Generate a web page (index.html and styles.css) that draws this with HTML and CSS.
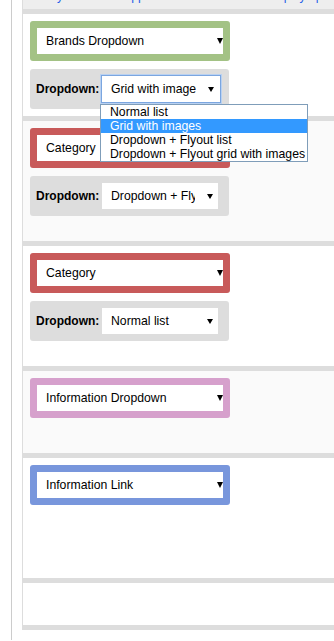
FILE: index.html
```html
<!DOCTYPE html>
<html lang="en">
<head>
    <meta charset="UTF-8">
    <meta name="viewport" content="width=device-width, initial-scale=1.0">
    <title>Menu blocks</title>
    <link rel="stylesheet" href="styles.css">
</head>
<body>
    <div class="rail">
        <div class="panel">
            <div class="topbar">
                <div class="topbar-text">
                    <span>y</span><span>pp</span><span>p</span><span>y</span><span>p</span>
                </div>
            </div>

            <div class="zone zone-first">
                <div class="pick pick-green">
                    <span class="pick-label">Brands Dropdown</span>
                    <span class="caret"></span>
                </div>
                <div class="dd-row">
                    <span class="dd-label">Dropdown:</span>
                    <div class="dd-select is-open">
                        <span class="dd-value">Grid with images</span>
                        <span class="caret"></span>
                        <ul class="dd-list">
                            <li>Normal list</li>
                            <li class="is-hl">Grid with images</li>
                            <li>Dropdown + Flyout list</li>
                            <li>Dropdown + Flyout grid with images</li>
                        </ul>
                    </div>
                </div>
            </div>

            <div class="zone zone-shade">
                <div class="pick pick-red">
                    <span class="pick-label">Category</span>
                    <span class="caret"></span>
                </div>
                <div class="dd-row">
                    <span class="dd-label">Dropdown:</span>
                    <div class="dd-select">
                        <span class="dd-value">Dropdown + Flyout list</span>
                        <span class="caret"></span>
                    </div>
                </div>
            </div>

            <div class="zone">
                <div class="pick pick-red">
                    <span class="pick-label">Category</span>
                    <span class="caret"></span>
                </div>
                <div class="dd-row">
                    <span class="dd-label">Dropdown:</span>
                    <div class="dd-select">
                        <span class="dd-value">Normal list</span>
                        <span class="caret"></span>
                    </div>
                </div>
            </div>

            <div class="zone zone-mid zone-shade">
                <div class="pick pick-pink">
                    <span class="pick-label">Information Dropdown</span>
                    <span class="caret"></span>
                </div>
            </div>

            <div class="zone">
                <div class="pick pick-blue">
                    <span class="pick-label">Information Link</span>
                    <span class="caret"></span>
                </div>
            </div>

            <div class="zone zone-end"></div>
        </div>
    </div>
</body>
</html>
```

FILE: styles.css
```css
body {
    margin: 0;
    font-family: "Liberation Sans", Arial, sans-serif;
    font-size: 12.25px;
    color: #000;
    background-color: #fff;
    overflow: hidden;
}
.rail {
    margin-left: 11px;
    padding-left: 10px;
    height: 640px;
    border-left: 1px solid #ccc;
}
.panel {
    border-left: 1px solid #ddd;
    border-bottom: 5px solid #ddd;
}
.topbar {
    height: 9px;
    overflow: hidden;
    background-color: #eee;
}
.topbar-text {
    margin-top: -10px;
    line-height: 12px;
    color: #1f5fe8;
    white-space: nowrap;
}
.topbar-text span:nth-child(1) { margin-left: 34px; }
.topbar-text span:nth-child(2) { margin-left: 68px; }
.topbar-text span:nth-child(3) { margin-left: 139px; }
.topbar-text span:nth-child(4) { margin-left: 9px; }
.topbar-text span:nth-child(5) { margin-left: 10px; }

.zone {
    box-sizing: border-box;
    height: 125px;
    padding: 7px 0 0 7px;
    border-top: 5px solid #ddd;
    background-color: #fff;
}
.zone-first {
    height: 107px;
}
.zone-mid {
    height: 87px;
}
.zone-end {
    height: 47px;
}
.zone-shade {
    background-color: #fafafa;
}

.pick {
    box-sizing: border-box;
    width: 200px;
    height: 40px;
    display: flex;
    align-items: center;
    padding-left: 9px;
    background-color: #fff;
    border: 7px solid #ccc;
    border-radius: 3px;
}
.pick-green { border-color: #a3c285; }
.pick-red { border-color: #c85a5a; }
.pick-pink { border-color: #d6a0cc; }
.pick-blue { border-color: #7896dc; }
.pick-label {
    flex: 1;
    white-space: nowrap;
}
.caret {
    width: 0;
    height: 0;
    border-left: 3px solid transparent;
    border-right: 3px solid transparent;
    border-top: 6px solid #000;
}

.dd-row {
    box-sizing: border-box;
    width: 199px;
    height: 40px;
    margin-top: 8px;
    padding-left: 6px;
    display: flex;
    align-items: center;
    background-color: #ddd;
    border-radius: 3px;
}
.dd-label {
    width: 66px;
    font-size: 12px;
    font-weight: bold;
}
.dd-select {
    position: relative;
    box-sizing: border-box;
    width: 116px;
    height: 26px;
    padding: 0 5px 0 9px;
    display: flex;
    align-items: center;
    background-color: #fff;
}
.dd-value {
    flex: 1;
    overflow: hidden;
    white-space: nowrap;
}
.dd-select .caret {
    margin-left: 12px;
    border-top-width: 5px;
}
.dd-select.is-open {
    width: 120px;
    height: 28px;
    margin-left: -1px;
    padding: 0 6px 0 9px;
    border: 1px solid #7ba6e0;
    box-shadow: 0 0 0 1px #b9d1f1;
}
.dd-list {
    position: absolute;
    top: calc(100% + 2px);
    left: -2px;
    z-index: 5;
    box-sizing: border-box;
    width: 208px;
    margin: 0;
    padding: 0;
    list-style: none;
    background-color: #fff;
    border: 1px solid #7f9db9;
}
.dd-list li {
    height: 14px;
    line-height: 14px;
    padding-left: 9px;
    white-space: nowrap;
}
.dd-list li.is-hl {
    background-color: #3399ff;
    color: #fff;
}
```
